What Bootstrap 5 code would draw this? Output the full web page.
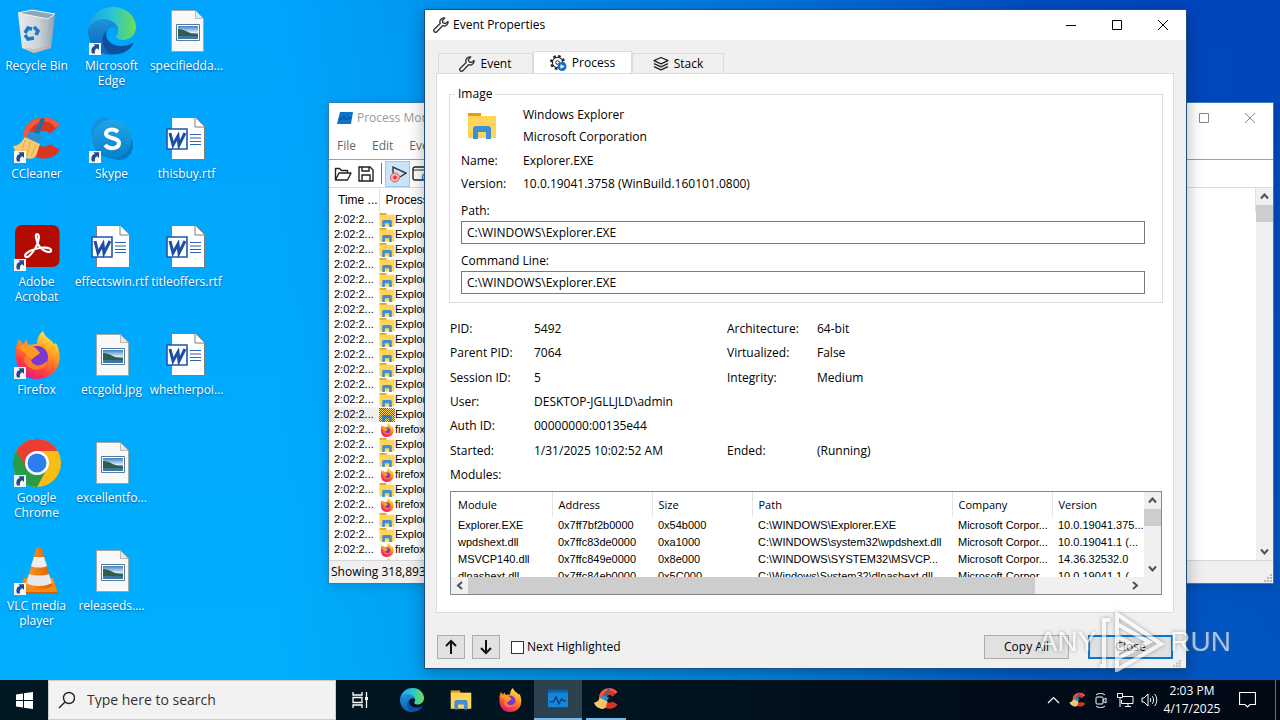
<!DOCTYPE html>
<html lang="en">
<head>
<meta charset="utf-8">
<meta name="viewport" content="width=device-width, initial-scale=1">
<title>Desktop</title>
<link href="https://cdn.jsdelivr.net/npm/bootstrap@5.3.0/dist/css/bootstrap.min.css" rel="stylesheet">
<style>
:root{--ui:"Open Sans","Noto Sans",sans-serif;--list:"Liberation Sans",Arial,sans-serif}
body{font-family:var(--ui);font-size:12px;line-height:16px;color:#000;background:#00a8fb;overflow:hidden}
button,input{font:inherit;color:inherit}
.desk{background:linear-gradient(180deg,rgba(0,130,240,.1),rgba(0,210,255,.16)),linear-gradient(90deg,#00a8ff 0,#00a8fe 22%,#0098f0 34%,#0074da 60%,#0048c0 80%,#003fb8 92%,#003db4 100%)}
.shortcuts{display:grid;grid-template-rows:repeat(6,108px);grid-auto-columns:75px;grid-auto-flow:column;width:max-content;padding-top:7px;margin-left:-1px}
.shortcut{color:#fff;text-decoration:none;text-align:center;line-height:15px;font-size:12px;text-shadow:0 1px 2px rgba(0,30,80,.6)}
.shortcut svg{width:48px;height:48px;display:block;margin:0 auto 3px}
.shortcut span{display:block;white-space:nowrap}
/* windows */
.win{position:absolute}
.win-back{left:328px;right:6px;top:102px;bottom:96px;background:#fff;border:1px solid #2f7fbd;box-shadow:0 2px 10px rgba(0,0,0,.15)}
.win-front{left:424px;right:93px;top:9px;background:#f0f0f0;border:1px solid #1b4f82;box-shadow:0 4px 16px rgba(0,0,0,.3)}
.titlebar{height:30px;background:#fff}
.win-back .titlebar{color:#999}
.capbtn{border:0;background:none;width:46px;height:30px;padding:0;line-height:0}
.menubar{height:26px;flex-shrink:0}
.menubar button{border:0;background:none;padding:0;color:#666}
.toolbar{height:29px;padding-left:2px;border-top:1px solid #a0a0a0;border-bottom:1px solid #dcdcdc}
.toolbar button{border:0;background:none;padding:0;width:23px;height:24px;line-height:0}
.toolbar .on{background:#cce4f7;outline:1px solid #99c9ef}
.plist{font-family:var(--list);font-size:11px;table-layout:fixed;width:100%;border-collapse:collapse}
.plist th{font-size:12px;font-weight:400;height:24px;padding:0 0 0 6px;border-right:1px solid #e2e2e2;white-space:nowrap}
.plist th:first-child{padding-left:9px}
.plist td{height:15px;padding:0 0 0 5px;line-height:15px;white-space:nowrap;overflow:hidden}
.plist td+td{padding:0}
.plist svg{width:16px;height:14px;vertical-align:top;margin-top:1px}
.plist .picked td:first-child{background:#f0f0f0}
.statusbar{height:23px;background:#f0f0f0;border-top:1px solid #d7d7d7;padding-left:2px}
.scrollv{width:17px;background:#f0f0f0}
.scrollv button,.scrollh button{border:0;background:none;padding:0;width:17px;height:17px;line-height:0}
.thumb{background:#cdcdcd}
/* tabs */
.tabrow{padding:11px 12px 0 13px;height:33px}
.tabx{border:1px solid #dcdcdc;border-bottom:0;background:#f0f0f0;height:20px;padding:0;display:flex;align-items:center;justify-content:center;gap:5px;width:95px}
.tabx.active{background:#fff;height:22px;width:99px}
.tabx.last{width:92px}
.pane{background:#fff;border:1px solid #dcdcdc;margin:0 12px 0 11px;padding:12px 10px 17px 12px}
.group{border:1px solid #dcdcdc;padding:0 17px 0 11px;height:217px}
.group legend{font-size:12px;line-height:16px;width:auto;float:none;margin:0 0 0 -6px;padding:0 3px}
.idgrid{display:grid;grid-template-columns:62px 1fr;grid-template-rows:22px 22px 25px 22px;align-items:center;margin-top:2px}
.idgrid svg{grid-row:span 2;margin-left:6px}
.caption{display:block;padding:8px 0 2px}
.caption+.field+.caption{padding-top:9px}
.field{height:23px;border:1px solid #7a7a7a;border-radius:0;padding:0 5px;width:100%;display:block;background:#fff}
.facts{display:grid;grid-template-columns:84px 193px 90px 1fr;grid-template-rows:repeat(7,1fr);height:170px;align-items:center;margin:14px 0 4px;padding-left:1px}
.modbox{border:1px solid #828790;height:104px;margin:0 1px}
.mods{font-family:var(--list);font-size:11px;table-layout:fixed;width:100%;line-height:17px}
.mods th{font-family:var(--ui);font-size:11px;font-weight:400;height:25px;padding:0 7px 0 6px;border-right:1px solid #e5e5e5}
.mods td{height:17px;padding:0 0 0 6px;white-space:nowrap;overflow:hidden}
.mods tr>:first-child{padding-left:7px}
.scrollh{height:17px;background:#f0f0f0;padding-right:17px}
.actions{padding:22px 12px 0}
.btnx{border:1px solid #adadad;background:#e1e1e1;height:24px;padding:0;width:85px}
.btnx.sq{width:28px;line-height:0;margin-right:7px}
.btnx.def{border:2px solid #0078d7;margin-left:19px;margin-right:1px}
.tick{appearance:none;width:13px;height:13px;border:1px solid #333;background:#fff;margin:0 3px 0 4px}
/* watermark */
.wm{position:absolute;right:49px;bottom:8px;color:#fff;opacity:.65;font:28px/60px "Liberation Sans",sans-serif;filter:drop-shadow(0 0 2px rgba(90,90,90,.8));pointer-events:none}
/* taskbar */
.taskbar{height:40px;background:linear-gradient(90deg,#001822,#001420 50%,#000814);color:#fff}
.taskbar button{border:0;background:none;padding:0;height:40px;width:49px;display:flex;align-items:center;justify-content:center}
.search{width:288px;background:#f2f2f2;height:40px;border:1px solid #ccc;color:#222}
.search input{border:0;background:none;font-size:14px;color:#222;outline:0}
.search input::placeholder{color:#333;opacity:1}
.taskbar .run{background:#2c424e;border-bottom:2px solid #76b9ed;width:48px}
.taskbar .bg-run{border-bottom:2px solid #76b9ed;width:40px;margin-left:4px}
.taskbar .tray{width:24px}
.taskbar .plain{width:48px}
.clock{font-size:12px;line-height:18px;width:62px;text-align:center}
</style>
</head>
<body class="vh-100 d-flex flex-column">

<svg width="0" height="0" class="position-absolute" aria-hidden="true">
<defs>
<linearGradient id="gEdgeA" x1="0" y1="0" x2="1" y2="0"><stop offset="0" stop-color="#1ba3e8"/><stop offset=".5" stop-color="#2cc3d4"/><stop offset="1" stop-color="#6be04f"/></linearGradient>
<linearGradient id="gEdgeB" x1="0" y1="0" x2="0" y2="1"><stop offset="0" stop-color="#1d93dc"/><stop offset="1" stop-color="#0c62b5"/></linearGradient>
<linearGradient id="gFox" x1=".8" y1="0" x2=".3" y2="1"><stop offset="0" stop-color="#fff04a"/><stop offset=".4" stop-color="#ff9a20"/><stop offset=".75" stop-color="#ff4040"/><stop offset="1" stop-color="#e31587"/></linearGradient>
<linearGradient id="gBin" x1="0" y1="0" x2="1" y2="0"><stop offset="0" stop-color="#e6ebee"/><stop offset=".55" stop-color="#cdd4d9"/><stop offset="1" stop-color="#8fa1ae"/></linearGradient>
<linearGradient id="gSky" x1="0" y1="0" x2="0" y2="1"><stop offset="0" stop-color="#3f80c8"/><stop offset=".5" stop-color="#d8ecf8"/><stop offset=".6" stop-color="#4d8ab0"/><stop offset="1" stop-color="#3d6fa0"/></linearGradient>
<linearGradient id="gSkype" x1="0" y1="0" x2="0" y2="1"><stop offset="0" stop-color="#22a5e6"/><stop offset="1" stop-color="#0580cc"/></linearGradient>
<linearGradient id="gCone" x1="0" y1="0" x2="1" y2="0"><stop offset="0" stop-color="#ff9a2a"/><stop offset="1" stop-color="#dd5c00"/></linearGradient>
<pattern id="dither" width="2" height="2" patternUnits="userSpaceOnUse"><path d="M0 0h1v1H0zM1 1h1v1H1z" fill="#0078d7"/></pattern>

<symbol id="lnk" viewBox="0 0 48 48"><path d="M1 36h12v12H1z" fill="#f4f6f9"/><path d="M4 46.500c-1.500-4 0-7 3-7.500l-1.500-1.700H11V43l-1.700-1.700C7 42 6.500 44 7 46.500z" fill="#254a8c"/></symbol>
<symbol id="bin" viewBox="0 0 48 48"><path d="M5 6l37 3-4 32-17 5-12-5z" fill="url(#gBin)"/><path d="M5 6l14-3 23 4-7 5z" fill="#8ea7b8" stroke="#edf5f9"/><path d="M35 12l-4 31" fill="none" stroke="#b8c4cc" stroke-width=".7"/><path d="M9 41l12 5 17-5-1-3-16 4z" fill="#c9a79a" opacity=".5"/><g fill="none" stroke="#1d78c8" stroke-width="3.500"><path d="M12 26l3-5 4 1"/><path d="M21 20l4 4-2 4"/><path d="M21 31l-6 1-3-4"/></g></symbol>
<symbol id="edge" viewBox="0 0 48 48"><path d="M0 22C2 9 12 0 25 0c14 0 23 10 23 20 0 8-6 13-13 13-6 0-8-3-6-5 4-6-2-14-11-14C9 14 2 18 0 22z" fill="url(#gEdgeA)"/><path d="M0 23c1-7 9-11 16-11 8 0 14 5 14 11-2-3-8-4-11 1-6 9 2 20 15 21-5 3-13 4-20 1C5 42 0 33 0 23z" fill="url(#gEdgeB)"/><path d="M19 24c-3 8 4 15 14 15 5 0 9-1 11-3 2 0 1 1 0 3-4 5-11 9-18 8-12-1-15-18-7-23z" fill="#0e4f9e"/></symbol>
<symbol id="photo" viewBox="0 0 48 48"><path d="M8.500 3.500h24l8 8v33h-32z" fill="#f8f8f8" stroke="#a99e95" stroke-width=".8"/><path d="M32.500 3.500v8h8z" fill="#d8eefb" stroke="#a99e95" stroke-width=".7"/><path d="M13.500 17.500h23v16h-23z" fill="#fff" stroke="#557b99"/><path d="M15 19h20v13H15z" fill="url(#gSky)"/><path d="M15 22c7 0 10 5 20 5.500v2L15 29z" fill="#2f5f4b"/></symbol>
<symbol id="word" viewBox="0 0 48 48"><path d="M8.500 2.500h24l9 9v33h-33z" fill="#fff" stroke="#7d7d7d"/><path d="M32 2.500v9.500h9.500" fill="#fff" stroke="#7d7d7d"/><path d="M4 14h20v20H4z" fill="#fff" stroke="#1d55b0" stroke-width="1.600"/><path d="M7 18l3 12 5-9 1 9 6-12" fill="none" stroke="#1c4ea5" stroke-width="3"/><path d="M27 19.500h11M27 23h11M27 26.500h11M27 29.500h11" stroke="#2b62b5" stroke-width="1.200"/></symbol>
<symbol id="cclean" viewBox="0 0 48 48"><path d="M47 10C38-3 11 0 10 22c0 23 28 28 37 13l-10-6c-5 5-13 3-13-5s8-11 13-5z" fill="#d93524"/><path d="M47 10C38-3 11 0 10 22c0 5 1 9 4 12-2-12 3-25 15-27 6-1 11 2 13 6z" fill="#f05a42"/><path d="M28 3l4 1-7 18-5-2z" fill="#286b9d"/><path d="M18 16l12 5-5 8-13-6z" fill="#2e8fd0"/><path d="M12 22l15 7-4 12c-4 4-8 3-13 1C5 40 2 37 0 31c5 0 8-3 12-9z" fill="#f7ca72"/><path d="M12 25L8 39m9-12l-3 14m9-11l-5 11" stroke="#e0ac52" fill="none"/></symbol>
<symbol id="skype" viewBox="0 0 48 48"><circle cx="17" cy="17" r="14" fill="#1a8fdb"/><circle cx="31" cy="31" r="14" fill="#0a78c8"/><circle cx="24" cy="24" r="19.500" fill="url(#gSkype)"/><path d="M30 17c-4-4-12-3-12 2s13 3 13 9c0 6-10 7-14 2" fill="none" stroke="#fff" stroke-width="4"/></symbol>
<symbol id="acro" viewBox="0 0 48 48"><rect x="2" y="2" width="44.500" height="42" rx="7" fill="#b30b00"/><path d="M13 34c-3-1 1-6 9-8 7-2 15-2 16 1 1 4-9 2-13-6-2-5-3-10-1-10 3 0 2 7-1 13-3 5-7 11-10 10z" fill="none" stroke="#fff" stroke-width="2.200"/></symbol>
<symbol id="fox" viewBox="0 0 48 48"><path d="M3 22C2 15 5 11 6 8l4 5c2-2 3-4 4-4 0 2 0 4 2 5 3-1 6-1 8-1 0-6 3-11 6-13 2 7 8 8 11 13 2-1 2-1 2-1 4 7 4 14 3 20-2 9-11 16-22 16C11 48 2 39 3 22z" fill="url(#gFox)"/><circle cx="24" cy="26" r="11" fill="#7a38d0"/><path d="M13 24c3-6 8-6 14-2l-9 7c2 7 11 7 15 1 3 9-18 14-22-1z" fill="#ff7a2c"/><path d="M4 17c8-6 17-4 23 5-4 4-7 3-8 6-5-3-6-7-15-11z" fill="#ff9a20"/></symbol>
<symbol id="chrome" viewBox="0 0 48 48"><circle cx="24" cy="24" r="24" fill="#fbbc14"/><path d="M24 24L3.200 12A24 24 0 0 0 24 48l10-18z" fill="#2a9c48"/><path d="M24 12h20.800A24 24 0 0 0 3.200 12l11 18z" fill="#ea3d33"/><circle cx="24" cy="24" r="12" fill="#fff"/><circle cx="24" cy="24" r="9.500" fill="#2c7df0"/></symbol>
<symbol id="vlc" viewBox="0 0 48 48"><path d="M11 31h29l5 16H6z" fill="#f98a12"/><path d="M6 45h39v2H6z" fill="#d36100"/><path d="M23 2c1-2 5-2 6 0l10 36c-4 6-22 6-26 0z" fill="url(#gCone)"/><path d="M21 10h10l3 9c-4 2-12 2-16 0z" fill="#eee"/><path d="M16 27c6 2 14 2 20 0l3 9c-6 4-20 4-26 0z" fill="#e8e8e8"/></symbol>
<symbol id="folder" viewBox="0 0 30 26"><path d="M1 0h13v4H1z" fill="#e2a010"/><path d="M1 3h28v22H1z" fill="#ffd458"/><path d="M6 15l2-2h14l2 2v11h-5v-7h-8v7H6z" fill="#3f8fd6"/></symbol>
<symbol id="mon" viewBox="0 0 24 22"><path d="M1 1h22v19H1z" fill="#1685dc"/><path d="M1 1h22v3H1z" fill="#0c62b0"/><path d="M3 14h4l3-5 3 7 3-5 2 2h3" fill="none" stroke="#0a3f7e" stroke-width="1.600"/></symbol>
<symbol id="wrench" viewBox="0 0 16 16"><path d="M15 4.500a4 4 0 0 1-5.500 4.200L3.800 14.700a1.700 1.700 0 0 1-2.500-2.400L7.200 6.500A4 4 0 0 1 11.700 1L9.300 3.500l.7 2.400 2.400.6z" fill="#fff" stroke="#333" stroke-width="1.400" stroke-linejoin="round"/></symbol>
<symbol id="up" viewBox="0 0 17 17"><path d="M5 10.500l3.500-4 3.500 4" fill="none" stroke="#505050" stroke-width="2"/></symbol>
<symbol id="down" viewBox="0 0 17 17"><path d="M5 6.500l3.500 4 3.500-4" fill="none" stroke="#505050" stroke-width="2"/></symbol>
<symbol id="grip" viewBox="0 0 10 10"><path d="M7 1h2v2H7zM4 4h2v2H4zM7 4h2v2H7zM1 7h2v2H1zM4 7h2v2H4zM7 7h2v2H7z" fill="#b8b8b8"/></symbol>
</defs>
</svg>

<main class="desk flex-grow-1 position-relative overflow-hidden">
  <nav class="shortcuts" aria-label="Desktop">
    <a href="#" class="shortcut"><svg><use href="#bin"/></svg><span>Recycle Bin</span></a>
    <a href="#" class="shortcut"><svg><use href="#cclean"/><use href="#lnk"/></svg><span>CCleaner</span></a>
    <a href="#" class="shortcut"><svg><use href="#acro"/><use href="#lnk"/></svg><span>Adobe<br>Acrobat</span></a>
    <a href="#" class="shortcut"><svg><use href="#fox"/><use href="#lnk"/></svg><span>Firefox</span></a>
    <a href="#" class="shortcut"><svg><use href="#chrome"/><use href="#lnk"/></svg><span>Google<br>Chrome</span></a>
    <a href="#" class="shortcut"><svg><use href="#vlc"/><use href="#lnk"/></svg><span>VLC media<br>player</span></a>
    <a href="#" class="shortcut"><svg><use href="#edge"/><use href="#lnk"/></svg><span>Microsoft<br>Edge</span></a>
    <a href="#" class="shortcut"><svg><use href="#skype"/><use href="#lnk"/></svg><span>Skype</span></a>
    <a href="#" class="shortcut"><svg><use href="#word"/></svg><span>effectswin.rtf</span></a>
    <a href="#" class="shortcut"><svg><use href="#photo"/></svg><span>etcgold.jpg</span></a>
    <a href="#" class="shortcut"><svg><use href="#photo"/></svg><span>excellentfo...</span></a>
    <a href="#" class="shortcut"><svg><use href="#photo"/></svg><span>releaseds....</span></a>
    <a href="#" class="shortcut"><svg><use href="#photo"/></svg><span>specifiedda...</span></a>
    <a href="#" class="shortcut"><svg><use href="#word"/></svg><span>thisbuy.rtf</span></a>
    <a href="#" class="shortcut"><svg><use href="#word"/></svg><span>titleoffers.rtf</span></a>
    <a href="#" class="shortcut"><svg><use href="#word"/></svg><span>whetherpoi...</span></a>
  </nav>

  <section class="win win-back d-flex flex-column" aria-label="Process Monitor">
    <div class="titlebar d-flex align-items-center ps-2 flex-shrink-0">
      <svg width="16" height="14"><path d="M3 1h13l-2 12H0z" fill="#0b74c9"/><path d="M2 8h3l2-3 2 4 2-2h3" fill="none" stroke="#0a3f7e"/></svg>
      <span class="ms-1">Process Mon</span>
      <button class="capbtn ms-auto" aria-label="Maximize"><svg width="10" height="10"><path d="M.5.5h9v9h-9z" fill="none" stroke="#888"/></svg></button>
      <button class="capbtn" aria-label="Close"><svg width="10" height="10"><path d="M0 0l10 10M10 0L0 10" stroke="#888"/></svg></button>
    </div>
    <div class="menubar d-flex align-items-center gap-3 px-2">
      <button>File</button><button>Edit</button><button>Eve</button>
    </div>
    <div class="toolbar d-flex align-items-center flex-shrink-0">
      <button aria-label="Open"><svg width="18" height="16"><path d="M1.500 14V2.500h4l2 2h6V7M1.500 14L5 7h12l-3.500 7z" fill="none" stroke="#222" stroke-width="1.400" stroke-linejoin="round"/></svg></button>
      <button aria-label="Save"><svg width="16" height="16"><path d="M1 1h11l3 3v11H1zM4 1v4h7V1M4 15V9h8v6" fill="none" stroke="#222" stroke-width="1.400"/></svg></button>
      <span class="border-start border-secondary mx-1 h-75"></span>
      <button class="on" aria-label="Capture"><svg width="18" height="18"><path d="M4 8V2l13 6-6 4" fill="none" stroke="#333" stroke-width="1.400"/><circle cx="6" cy="12.500" r="4.500" fill="#f4b6b3" stroke="#e05a55"/><circle cx="6" cy="12.500" r="2" fill="#e0413b"/></svg></button>
      <button aria-label="Autoscroll"><svg width="18" height="16"><rect x="1" y="1" width="15" height="13" rx="2" fill="none" stroke="#222" stroke-width="1.400"/><path d="M1 4h15" stroke="#222"/><circle cx="14" cy="11" r="3.500" fill="#fff" stroke="#2a7fd0" stroke-width="1.500"/></svg></button>
    </div>
    <div class="d-flex flex-grow-1 overflow-hidden">
      <div class="flex-grow-1 overflow-hidden">
        <table class="plist">
          <colgroup><col style="width:50px"><col></colgroup>
          <thead><tr><th>Time ...</th><th>Process</th></tr></thead>
          <tbody id="procs"></tbody>
        </table>
      </div>
      <div class="scrollv d-flex flex-column flex-shrink-0">
        <button aria-label="Scroll up"><svg width="17" height="17"><use href="#up"/></svg></button>
        <div class="thumb" style="height:17px"></div>
        <button class="mt-auto" aria-label="Scroll down"><svg width="17" height="17"><use href="#down"/></svg></button>
      </div>
    </div>
    <div class="statusbar d-flex align-items-center flex-shrink-0">
      <span>Showing 318,893</span>
      <svg class="ms-auto align-self-end" width="10" height="10"><use href="#grip"/></svg>
    </div>
  </section>

  <section class="win win-front" aria-label="Event Properties">
    <div class="titlebar d-flex align-items-center ps-2">
      <svg width="16" height="16"><use href="#wrench"/></svg>
      <span class="ms-1">Event Properties</span>
      <button class="capbtn ms-auto" aria-label="Minimize"><svg width="10" height="10"><path d="M0 5.500h10" stroke="#000"/></svg></button>
      <button class="capbtn" aria-label="Maximize"><svg width="10" height="10"><path d="M.5.5h9v9h-9z" fill="none" stroke="#000"/></svg></button>
      <button class="capbtn" aria-label="Close"><svg width="10" height="10"><path d="M0 0l10 10M10 0L0 10" stroke="#000"/></svg></button>
    </div>
    <div class="tabrow d-flex align-items-end" role="tablist">
      <button class="tabx" role="tab"><svg width="16" height="16"><use href="#wrench"/></svg>Event</button>
      <button class="tabx active" role="tab" aria-selected="true"><svg width="17" height="16"><circle cx="7.500" cy="7.500" r="5" fill="none" stroke="#222" stroke-width="1.500"/><circle cx="7.500" cy="7.500" r="6.500" fill="none" stroke="#222" stroke-width="2" stroke-dasharray="2.600 2.500"/><circle cx="7.500" cy="7.500" r="4.500" fill="#fff"/><circle cx="7.500" cy="7.500" r="1.800" fill="none" stroke="#222"/><circle cx="12" cy="11.500" r="4.500" fill="#1470c8"/><path d="M10.500 9.200l4 2.300-4 2.300z" fill="#fff"/></svg>Process</button>
      <button class="tabx last" role="tab"><svg width="16" height="16"><path d="M8 1.500l7 3.200-7 3.200-7-3.200zM1 7.700l7 3.200 7-3.200M1 10.700l7 3.200 7-3.200" fill="none" stroke="#222" stroke-width="1.300" stroke-linejoin="round"/></svg>Stack</button>
    </div>
    <div class="pane">
      <fieldset class="group">
        <legend>Image</legend>
        <div class="idgrid">
          <svg width="30" height="26"><use href="#folder"/></svg>
          <span>Windows Explorer</span><span>Microsoft Corporation</span>
          <span>Name:</span><span>Explorer.EXE</span>
          <span>Version:</span><span>10.0.19041.3758 (WinBuild.160101.0800)</span>
        </div>
        <label for="path" class="caption">Path:</label>
        <input id="path" class="field" value="C:\WINDOWS\Explorer.EXE" readonly>
        <label for="cmd" class="caption">Command Line:</label>
        <input id="cmd" class="field" value="C:\WINDOWS\Explorer.EXE" readonly>
      </fieldset>
      <div class="facts">
        <span>PID:</span><span>5492</span><span>Architecture:</span><span>64-bit</span>
        <span>Parent PID:</span><span>7064</span><span>Virtualized:</span><span>False</span>
        <span>Session ID:</span><span>5</span><span>Integrity:</span><span>Medium</span>
        <span>User:</span><span>DESKTOP-JGLLJLD\admin</span><span></span><span></span>
        <span>Auth ID:</span><span>00000000:00135e44</span><span></span><span></span>
        <span>Started:</span><span>1/31/2025 10:02:52 AM</span><span>Ended:</span><span>(Running)</span>
        <span>Modules:</span>
      </div>
      <div class="modbox d-flex flex-column">
        <div class="d-flex flex-grow-1 overflow-hidden">
          <div class="flex-grow-1 overflow-hidden">
            <table class="mods">
              <colgroup><col style="width:101px"><col style="width:100px"><col style="width:100px"><col style="width:200px"><col style="width:100px"><col></colgroup>
              <thead><tr><th>Module</th><th>Address</th><th>Size</th><th>Path</th><th>Company</th><th class="border-0">Version</th></tr></thead>
              <tbody>
                <tr><td>Explorer.EXE</td><td>0x7ff7bf2b0000</td><td>0x54b000</td><td>C:\WINDOWS\Explorer.EXE</td><td>Microsoft Corpor...</td><td>10.0.19041.375...</td></tr>
                <tr><td>wpdshext.dll</td><td>0x7ffc83de0000</td><td>0xa1000</td><td>C:\WINDOWS\system32\wpdshext.dll</td><td>Microsoft Corpor...</td><td>10.0.19041.1 (...</td></tr>
                <tr><td>MSVCP140.dll</td><td>0x7ffc849e0000</td><td>0x8e000</td><td>C:\WINDOWS\SYSTEM32\MSVCP...</td><td>Microsoft Corpor...</td><td>14.36.32532.0</td></tr>
                <tr><td>dlnashext.dll</td><td>0x7ffc84eb0000</td><td>0x5C000</td><td>C:\Windows\System32\dlnashext.dll</td><td>Microsoft Corpor...</td><td>10.0.19041.1 (...</td></tr>
              </tbody>
            </table>
          </div>
          <div class="scrollv d-flex flex-column flex-shrink-0">
            <button aria-label="Scroll up"><svg width="17" height="17"><use href="#up"/></svg></button>
            <div class="thumb" style="height:17px"></div>
            <button class="mt-auto" aria-label="Scroll down"><svg width="17" height="17"><use href="#down"/></svg></button>
          </div>
        </div>
        <div class="scrollh d-flex flex-shrink-0">
          <button aria-label="Scroll left"><svg width="17" height="17"><path d="M11 5L7 8.500l4 3.500" fill="none" stroke="#505050" stroke-width="2"/></svg></button>
          <div class="flex-grow-1"><div class="thumb h-100" style="width:86%"></div></div>
          <button aria-label="Scroll right"><svg width="17" height="17"><path d="M6 5l4 3.500L6 12" fill="none" stroke="#505050" stroke-width="2"/></svg></button>
        </div>
      </div>
    </div>
    <div class="actions d-flex align-items-center">
      <button class="btnx sq" aria-label="Previous"><svg width="14" height="16"><path d="M7 15V2M2 7l5-5 5 5" fill="none" stroke="#111" stroke-width="2"/></svg></button>
      <button class="btnx sq" aria-label="Next"><svg width="14" height="16"><path d="M7 1v13M2 9l5 5 5-5" fill="none" stroke="#111" stroke-width="2"/></svg></button>
      <input type="checkbox" class="tick" id="nh"><label for="nh">Next Highlighted</label>
      <button class="btnx ms-auto">Copy All</button>
      <button class="btnx def">Close</button>
    </div>
    <div class="d-flex justify-content-end pe-1"><svg width="10" height="9"><use href="#grip"/></svg></div>
  </section>

  <div class="wm d-flex align-items-center" aria-hidden="true">
    <span>ANY</span>
    <svg width="66" height="60" class="mx-1"><path d="M10 8H4v46H0M17 2v56l44-26zM17 12l32 18-32 17M17 24l14 8-14 8" fill="none" stroke="#fff" stroke-width="4"/></svg>
    <span>RUN</span>
  </div>
</main>

<footer class="taskbar d-flex align-items-center">
  <button class="plain" aria-label="Start"><svg width="17" height="17"><path d="M0 2.500l7-1V8H0zM8 1.300L17 0v8H8zM0 9h7v6.500l-7-1zM8 9h9v8l-9-1.300z" fill="#fff"/></svg></button>
  <label class="search d-flex align-items-center">
    <svg width="18" height="18" class="ms-2 me-2"><circle cx="12" cy="7" r="5.500" fill="none" stroke="#222" stroke-width="1.400"/><path d="M8 11l-6 6" stroke="#222" stroke-width="1.400"/></svg>
    <input type="text" placeholder="Type here to search" aria-label="Search" class="flex-grow-1 ps-1 py-0">
  </label>
  <button class="plain" aria-label="Task view"><svg width="18" height="18" fill="none" stroke="#fff" stroke-width="1.300"><path d="M2 1v3h9V1M2 17v-3h9v3M2 6.500h9v5H2zM15.500 1v16"/><path d="M14 6h3v3h-3z" fill="#fff" stroke="none"/></svg></button>
  <button class="ms-1" aria-label="Edge" style="margin-left:3px!important"><svg width="24" height="24"><use href="#edge"/></svg></button>
  <button aria-label="Explorer"><svg width="22" height="20"><use href="#folder"/></svg></button>
  <button aria-label="Firefox"><svg width="24" height="24"><use href="#fox"/></svg></button>
  <button class="run" aria-label="Process Monitor"><svg width="24" height="20"><use href="#mon"/></svg></button>
  <button class="bg-run" aria-label="CCleaner"><svg width="24" height="24"><use href="#cclean"/></svg></button>
  <div class="ms-auto d-flex align-items-center">
    <button class="tray" aria-label="Show hidden icons"><svg width="13" height="8"><path d="M1 7l5.500-5.500L12 7" fill="none" stroke="#fff" stroke-width="1.200"/></svg></button>
    <button class="tray" aria-label="CCleaner"><svg width="17" height="16"><use href="#cclean"/></svg></button>
    <button class="tray" aria-label="Meet now"><svg width="14" height="16" fill="none" stroke="#fff"><rect x="2" y="5" width="7" height="7" rx="1"/><path d="M9 8l3-2v5l-3-2M2 3c2-2 7-2 9 0M2 14c2 2 7 2 9 0"/></svg></button>
    <button class="tray" aria-label="Network"><svg width="17" height="15" fill="none" stroke="#fff"><path d="M6 3.500h10v7H4.500V7M8 13.500h6M11 10v3M.5.500h5v4h-5zM3 5v9"/></svg></button>
    <button class="tray" aria-label="Volume"><svg width="17" height="14" fill="none" stroke="#fff"><path d="M1 5h2l4-4v12L3 9H1zM9 5c1 1 1 3 0 4M11 3c2 2 2 6 0 8M13.500 1c3 3 3 9 0 12"/></svg></button>
    <div class="clock">2:03 PM<br>4/17/2025</div>
    <button class="plain" aria-label="Notifications"><svg width="17" height="16"><path d="M.5.500h16v12H11L8.500 15 6 12.500H.5z" fill="none" stroke="#fff" stroke-width="1.200"/></svg></button>
    <span class="border-start border-secondary ms-1 ps-1" style="height:40px"></span>
  </div>
</footer>

<script src="https://cdn.jsdelivr.net/npm/bootstrap@5.3.0/dist/js/bootstrap.bundle.min.js"></script>
<script>
// e = Explorer, s = selected Explorer row, f = firefox
const order = 'eeeeeeeeeeeeesfeefefeeff';
document.getElementById('procs').innerHTML = [...order].map(k => {
  const fox = k === 'f';
  const veil = k === 's' ? '<rect width="16" height="14" fill="url(#dither)"/>' : '';
  return `<tr class="${k === 's' ? 'picked' : ''}"><td>2:02:2...</td><td><svg><use href="#${fox ? 'fox' : 'folder'}"/>${veil}</svg>${fox ? 'firefox.' : 'Explor'}</td></tr>`;
}).join('');
</script>
</body>
</html>
